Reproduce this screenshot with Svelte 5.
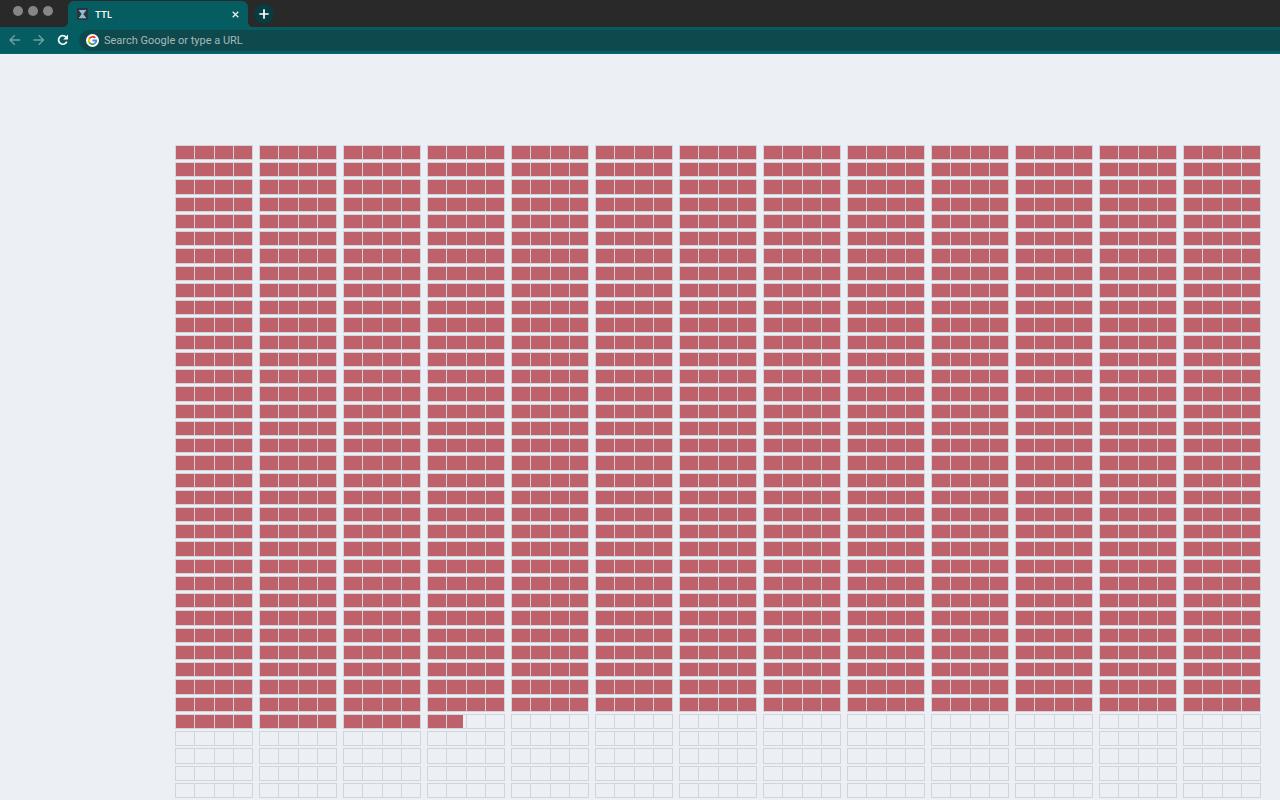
<script lang="ts">
  const rowCount = 38;
  const groupCount = 13;
  const cellsPerGroup = 4;
  const elapsed = 33 * groupCount * cellsPerGroup + 13.88;

  const rows = Array.from({ length: rowCount }, (_, r) =>
    Array.from({ length: groupCount }, (_, g) =>
      Array.from({ length: cellsPerGroup }, (_, c) => {
        const index = (r * groupCount + g) * cellsPerGroup + c;
        return Math.round(Math.max(0, Math.min(1, elapsed - index)) * 100);
      })
    )
  );

  let query = $state("");
</script>

<div class="browser">
  <header class="titlebar">
    <div class="lights">
      <span></span>
      <span></span>
      <span></span>
    </div>
    <div class="tab">
      <svg class="favicon" width="11" height="12" viewBox="0 0 11 12" aria-hidden="true">
        <rect width="11" height="12" fill="#2e3440" />
        <path d="M2 2h7v1.2H2zM2 9h7v1.2H2zM3 3h5v1L6.3 6.1 8 8.2v1H3v-1l1.7-2.1L3 4z" fill="#8fbcd0" />
      </svg>
      <span class="tab-title">TTL</span>
      <button class="close" aria-label="Close tab">
        <svg width="7" height="7" viewBox="0 0 7 7">
          <path d="M.7.7l5.6 5.6M6.3.7L.7 6.3" stroke="#e6f0f0" stroke-width="1.3" />
        </svg>
      </button>
    </div>
    <button class="new-tab" aria-label="New tab">
      <svg width="10" height="10" viewBox="0 0 10 10">
        <path d="M5 .3v9.4M.3 5h9.4" stroke="#fff" stroke-width="1.7" />
      </svg>
    </button>
  </header>

  <nav class="toolbar">
    <button aria-label="Back">
      <svg width="12" height="12" viewBox="0 0 12 12" fill="none" stroke="#70a2a5" stroke-width="1.4">
        <path d="M11 6H1M5.8 1.2L1 6l4.8 4.8" />
      </svg>
    </button>
    <button aria-label="Forward">
      <svg width="12" height="12" viewBox="0 0 12 12" fill="none" stroke="#70a2a5" stroke-width="1.4">
        <path d="M.5 6h10M5.7 1.2L10.5 6l-4.8 4.8" />
      </svg>
    </button>
    <button aria-label="Reload">
      <svg width="12" height="12" viewBox="0 0 12 12">
        <path d="M9.8 7.6A4.3 4.3 0 1 1 9 3" fill="none" stroke="#fff" stroke-width="1.7" />
        <path d="M11 .6v4.8H6.2z" fill="#fff" />
      </svg>
    </button>
    <label class="address">
      <svg width="13" height="13" viewBox="0 0 26 26" aria-hidden="true">
        <circle cx="13" cy="13" r="13" fill="#fff" />
        <g fill="none" stroke-width="3.6">
          <path d="M6.5 9.3A7.5 7.5 0 0 1 18.5 7.9" stroke="#ea4335" />
          <path d="M6.5 16.7a7.5 7.5 0 0 1 0-7.4" stroke="#fbbc05" />
          <path d="M17.9 18.7A7.5 7.5 0 0 1 6.5 16.7" stroke="#34a853" />
          <path d="M13 13h7.5a7.5 7.5 0 0 1-2.6 5.7" stroke="#4285f4" />
        </g>
      </svg>
      <input type="text" bind:value={query} placeholder="Search Google or type a URL" aria-label="Address" />
    </label>
  </nav>

  <main class="grid">
    {#each rows as row}
      <div class="row">
        {#each row as group}
          <div class="group">
            {#each group as fill}
              <div class="cell">
                {#if fill > 0}
                  <div class="fill" style="width: {fill}%"></div>
                {/if}
              </div>
            {/each}
          </div>
        {/each}
      </div>
    {/each}
  </main>
</div>

<style>
  :global(body) {
    margin: 0;
    background: #eceff4;
  }
  .browser {
    min-height: 100vh;
    display: flex;
    flex-direction: column;
    font-family: Roboto, sans-serif;
  }
  button {
    display: flex;
    align-items: center;
    justify-content: center;
    padding: 0;
    border: 0;
    background: none;
  }

  .titlebar {
    display: flex;
    height: 27px;
    background: #292929;
  }
  .lights {
    display: flex;
    gap: 5px;
    padding: 6px 15px 0 13px;
  }
  .lights span {
    width: 10px;
    height: 10px;
    border-radius: 50%;
    background: #868686;
  }
  .tab {
    position: relative;
    display: flex;
    align-items: center;
    box-sizing: border-box;
    width: 180px;
    margin-top: 1px;
    padding: 0 8px 0 9px;
    border-radius: 6px 6px 0 0;
    background: #055c61;
  }
  /* flared feet of the active tab */
  .tab::before,
  .tab::after {
    content: "";
    position: absolute;
    bottom: 0;
    width: 5px;
    height: 5px;
  }
  .tab::before {
    right: 100%;
    background: radial-gradient(circle at 0 0, transparent 5px, #055c61 5px);
  }
  .tab::after {
    left: 100%;
    background: radial-gradient(circle at 100% 0, transparent 5px, #055c61 5px);
  }
  .tab-title {
    flex: 1;
    margin-left: 7px;
    font-family: Inter, sans-serif;
    font-size: 9px;
    font-weight: 600;
    color: #fff;
  }
  .close {
    width: 9px;
    height: 12px;
  }
  .new-tab {
    width: 20px;
    height: 20px;
    margin: 4px 0 0 6px;
    border-radius: 50%;
    background: #073c40;
  }

  .toolbar {
    display: flex;
    align-items: center;
    gap: 12px;
    height: 26px;
    padding-left: 9px;
    border-bottom: 1px solid #0b666b;
    background: #055c61;
  }
  .toolbar button {
    width: 12px;
    height: 12px;
  }
  .address {
    flex: 1;
    display: flex;
    align-items: center;
    gap: 5px;
    height: 21px;
    margin-left: -2px;
    padding-left: 7px;
    border-radius: 11px 0 0 11px;
    background: #0e494e;
  }
  .address input {
    flex: 1;
    padding: 0;
    border: 0;
    outline: 0;
    background: none;
    font-family: inherit;
    font-size: 11px;
    color: #fff;
  }
  .address input::placeholder {
    color: #a4b9bb;
    opacity: 1;
  }

  .grid {
    flex: 1;
    display: grid;
    grid-auto-rows: 1fr;
    row-gap: 2px;
    padding: 91px 19px 1px 175px;
    margin-bottom: 1px;
  }
  .row {
    display: grid;
    grid-template-columns: repeat(13, 1fr);
    column-gap: 6px;
  }
  .group {
    display: grid;
    grid-template-columns: repeat(4, 1fr);
    border: solid #d1d4d9;
    border-width: 1px 1px 1px 0;
  }
  .cell {
    display: flex;
    min-height: 13px;
    border-left: 1px solid #d1d4d9;
  }
  .fill {
    background: #bf616a;
  }
</style>
